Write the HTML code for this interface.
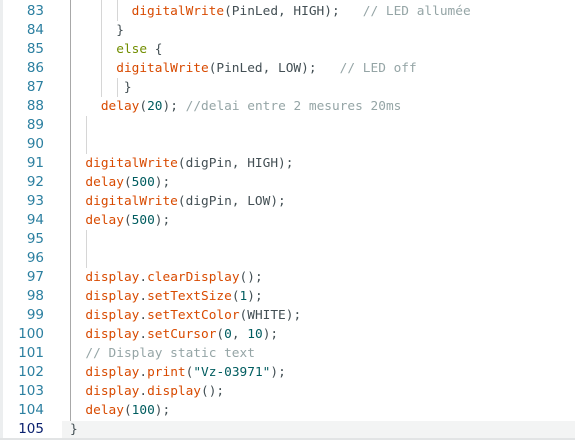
<!DOCTYPE html>
<html><head><style>
html,body{margin:0;padding:0;background:#fff;width:575px;height:440px;overflow:hidden;position:relative}
.ln{position:absolute;left:0;width:44px;text-align:right;font:13.5px "DejaVu Sans","Liberation Sans",sans-serif;color:#2b7fa0;height:19px;line-height:19px}
.c{position:absolute;left:70px;white-space:pre;font:12.8px "DejaVu Sans Mono",monospace;color:#434f54;height:19px;line-height:19px}
.f{color:#d84a00}.n{color:#005c5f}.m{color:#95a5a6}.k{color:#728e00}
.g{position:absolute;width:1px;background:#d6d6d6}
</style></head><body>
<div style="position:absolute;left:0;top:0;width:3px;height:440px;background:#eceeef"></div>
<div style="position:absolute;left:62px;top:421px;width:513px;height:17px;background:#f3f4f4"></div>
<div style="position:absolute;left:0;top:438px;width:575px;height:2px;background:#e2e4e5"></div>
<div class="g" style="left:70px;top:0;height:421px;background:#a8a8a8"></div>
<div class="g" style="left:101px;top:0;height:97px"></div>
<div class="g" style="left:117px;top:0;height:21px"></div>
<div class="g" style="left:117px;top:78px;height:19px"></div>
<div class="g" style="left:86px;top:116px;height:38px"></div>
<div class="g" style="left:86px;top:230px;height:38px"></div>

<div class="ln" style="top:2px">83</div><div class="c" style="top:2px">        <span class="f">digitalWrite</span>(PinLed, HIGH);   <span class="m">// LED allumée</span></div>
<div class="ln" style="top:21px">84</div><div class="c" style="top:21px">      }</div>
<div class="ln" style="top:40px">85</div><div class="c" style="top:40px">      <span class="k">else</span> {</div>
<div class="ln" style="top:59px">86</div><div class="c" style="top:59px">      <span class="f">digitalWrite</span>(PinLed, LOW);   <span class="m">// LED off</span></div>
<div class="ln" style="top:78px">87</div><div class="c" style="top:78px">       }</div>
<div class="ln" style="top:97px">88</div><div class="c" style="top:97px">    <span class="f">delay</span>(<span class="n">20</span>); <span class="m">//delai entre 2 mesures 20ms</span></div>
<div class="ln" style="top:116px">89</div>
<div class="ln" style="top:135px">90</div>
<div class="ln" style="top:154px">91</div><div class="c" style="top:154px">  <span class="f">digitalWrite</span>(digPin, HIGH);</div>
<div class="ln" style="top:173px">92</div><div class="c" style="top:173px">  <span class="f">delay</span>(<span class="n">500</span>);</div>
<div class="ln" style="top:192px">93</div><div class="c" style="top:192px">  <span class="f">digitalWrite</span>(digPin, LOW);</div>
<div class="ln" style="top:211px">94</div><div class="c" style="top:211px">  <span class="f">delay</span>(<span class="n">500</span>);</div>
<div class="ln" style="top:230px">95</div>
<div class="ln" style="top:249px">96</div>
<div class="ln" style="top:268px">97</div><div class="c" style="top:268px">  <span class="f">display</span>.<span class="f">clearDisplay</span>();</div>
<div class="ln" style="top:287px">98</div><div class="c" style="top:287px">  <span class="f">display</span>.<span class="f">setTextSize</span>(<span class="n">1</span>);</div>
<div class="ln" style="top:306px">99</div><div class="c" style="top:306px">  <span class="f">display</span>.<span class="f">setTextColor</span>(WHITE);</div>
<div class="ln" style="top:325px">100</div><div class="c" style="top:325px">  <span class="f">display</span>.<span class="f">setCursor</span>(<span class="n">0</span>, <span class="n">10</span>);</div>
<div class="ln" style="top:344px">101</div><div class="c" style="top:344px">  <span class="m">// Display static text</span></div>
<div class="ln" style="top:363px">102</div><div class="c" style="top:363px">  <span class="f">display</span>.<span class="f">print</span>(<span class="n">"Vz-03971"</span>);</div>
<div class="ln" style="top:382px">103</div><div class="c" style="top:382px">  <span class="f">display</span>.<span class="f">display</span>();</div>
<div class="ln" style="top:401px">104</div><div class="c" style="top:401px">  <span class="f">delay</span>(<span class="n">100</span>);</div>
<div class="ln" style="top:420px;color:#0b216f">105</div><div class="c" style="top:420px">}</div>
</body></html>
